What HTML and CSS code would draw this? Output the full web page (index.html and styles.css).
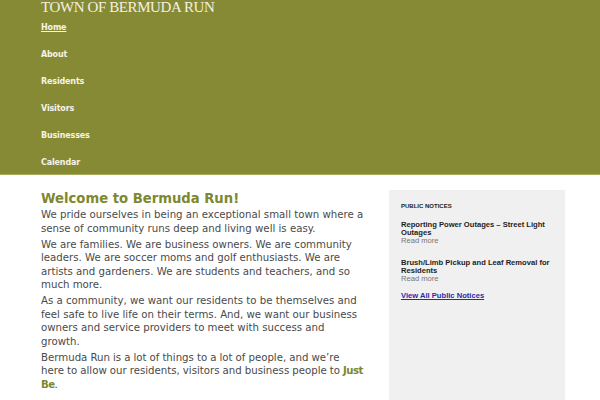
FILE: index.html
```html
<!DOCTYPE html>
<html lang="en">
<head>
<meta charset="utf-8">
<title>Town of Bermuda Run</title>
<link rel="stylesheet" href="styles.css">
</head>
<body>
<header class="site-header">
  <div class="site-title">TOWN OF BERMUDA RUN</div>
  <nav class="main-nav">
    <ul>
      <li><a class="current" href="#">Home</a></li>
      <li><a href="#">About</a></li>
      <li><a href="#">Residents</a></li>
      <li><a href="#">Visitors</a></li>
      <li><a href="#">Businesses</a></li>
      <li><a href="#">Calendar</a></li>
    </ul>
  </nav>
</header>
<main class="page">
  <section class="content">
    <h1 class="welcome">Welcome to Bermuda Run!</h1>
    <p>We pride ourselves in being an exceptional small town where a sense of community runs deep and living well is easy.</p>
    <p>We are families. We are business owners. We are community leaders. We are soccer moms and golf enthusiasts. We are artists and gardeners. We are students and teachers, and so much more.</p>
    <p>As a community, we want our residents to be themselves and feel safe to live life on their terms. And, we want our business owners and service providers to meet with success and growth.</p>
    <p class="tight">Bermuda Run is a lot of things to a lot of people, and we’re here to allow our residents, visitors and business people to <strong class="accent">Just Be</strong>.</p>
  </section>
  <aside class="sidebar">
    <h2 class="side-title">PUBLIC NOTICES</h2>
    <div class="notice">
      <div class="notice-title">Reporting Power Outages – Street Light Outages</div>
      <div class="read-more">Read more</div>
    </div>
    <div class="notice">
      <div class="notice-title">Brush/Limb Pickup and Leaf Removal for Residents</div>
      <div class="read-more">Read more</div>
    </div>
    <a class="view-all" href="#">View All Public Notices</a>
  </aside>
</main>
</body>
</html>
```
FILE: styles.css
```css
html, body {
  margin: 0;
  padding: 0;
  background: #ffffff;
}
body {
  font-family: "DejaVu Sans", sans-serif;
  color: #444444;
}
.site-header {
  background: #878a34;
  height: 175px;
  padding-left: 41px;
  box-sizing: border-box;
  border-bottom: 1px solid #a9ac5a;
  overflow: hidden;
}
.site-title {
  font-family: "Liberation Serif", serif;
  font-size: 15px;
  letter-spacing: -0.4px;
  line-height: 12px;
  color: #f4f1e0;
  height: 11px;
  padding-top: 1px;
}
.main-nav ul {
  list-style: none;
  margin: 0;
  padding: 0;
}
.main-nav li {
  height: 27px;
  line-height: 26px;
}
.main-nav a {
  font-family: "DejaVu Sans", sans-serif;
  font-weight: bold;
  font-size: 8px;
  letter-spacing: -0.15px;
  color: #f6f3e4;
  text-decoration: none;
}
.main-nav a.current {
  text-decoration: underline;
}
.page {
  display: flex;
  align-items: flex-start;
  gap: 24px;
  padding: 0 35px 0 41px;
}
.content {
  flex: 1;
  padding-top: 15px;
}
.welcome {
  font-family: "DejaVu Sans", sans-serif;
  font-weight: bold;
  font-size: 13.2px;
  line-height: 18px;
  color: #7d8830;
  margin: 0;
}
.content p {
  font-size: 10.2px;
  line-height: 13.5px;
  margin: 0 0 2.5px;
  color: #4a4a4a;
}
.content p.tight {
  word-spacing: -0.2px;
}
.accent {
  color: #7d8830;
  letter-spacing: -0.6px;
}
.sidebar {
  width: 176px;
  flex: none;
  margin-top: 15px;
  background: #f0f0f0;
  padding: 12px 12px 30px;
  box-sizing: border-box;
  min-height: 220px;
  font-family: "Liberation Sans", Arial, sans-serif;
}
.side-title {
  font-size: 6px;
  font-weight: bold;
  color: #222;
  margin: 0 0 11px;
  line-height: 8px;
}
.notice + .notice {
  margin-top: 14px;
}
.notice-title {
  font-size: 7.6px;
  font-weight: bold;
  line-height: 8px;
  color: #1e1e1e;
}
.read-more {
  font-size: 7.6px;
  line-height: 8px;
  color: #777;
}
.view-all {
  display: block;
  margin-top: 9px;
  font-size: 7.6px;
  line-height: 8px;
  font-weight: bold;
  color: #2a2aa8;
  text-decoration: underline;
}
```
